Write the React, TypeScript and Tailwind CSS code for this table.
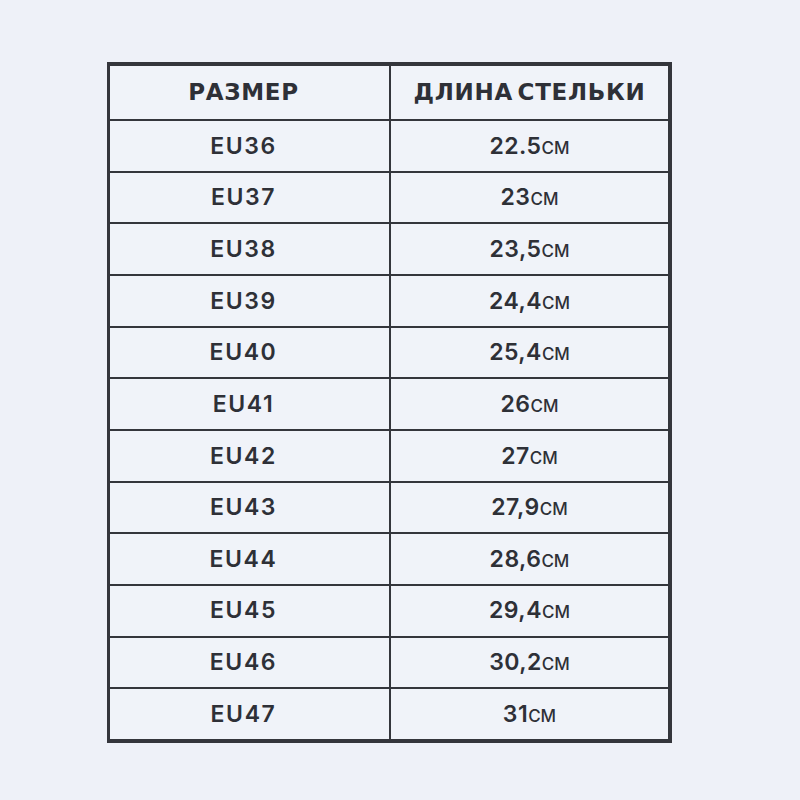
const rows: [string, string, string][] = [
  ['EU36', '22.5', 'см'],
  ['EU37', '23', 'см'],
  ['EU38', '23,5', 'см'],
  ['EU39', '24,4', 'см'],
  ['EU40', '25,4', 'см'],
  ['EU41', '26', 'см'],
  ['EU42', '27', 'см'],
  ['EU43', '27,9', 'см'],
  ['EU44', '28,6', 'см'],
  ['EU45', '29,4', 'см'],
  ['EU46', '30,2', 'см'],
  ['EU47', '31', 'см'],
]

export default function App() {
  return (
    <div className="w-[800px] h-[800px] bg-[#eef1f8] pl-[107px] pt-[62px] text-[#2e3037]">
      <div className="w-[565px] border-[#34363c] border-t-[4px] border-l-[3px] border-r-[4px] border-b-[4px] bg-[#f0f3f9]">
        <div className="grid grid-cols-2 h-[53px] items-center font-['DejaVu_Sans',sans-serif] font-bold text-[23px]">
          <div className="h-full flex items-center justify-center pr-3 tracking-[0.03em]">РАЗМЕР</div>
          <div className="h-full flex items-center justify-center border-l-2 border-[#34363c] tracking-[0.03em] [word-spacing:-4px]">
            ДЛИНА СТЕЛЬКИ
          </div>
        </div>
        {rows.map(([size, len, unit]) => (
          <div
            key={size}
            className="grid grid-cols-2 h-[51.67px] border-t-2 border-[#34363c] font-['Inter',sans-serif] font-semibold text-[23px]"
          >
            <div className="flex items-center justify-center pr-3 tracking-[0.07em]">{size}</div>
            <div className="flex items-center justify-center border-l-2 border-[#34363c] tracking-[0.02em]">
              <span>
                {len}
                <span className="text-[17px] font-medium tracking-normal">{unit.toUpperCase()}</span>
              </span>
            </div>
          </div>
        ))}
      </div>
    </div>
  )
}
